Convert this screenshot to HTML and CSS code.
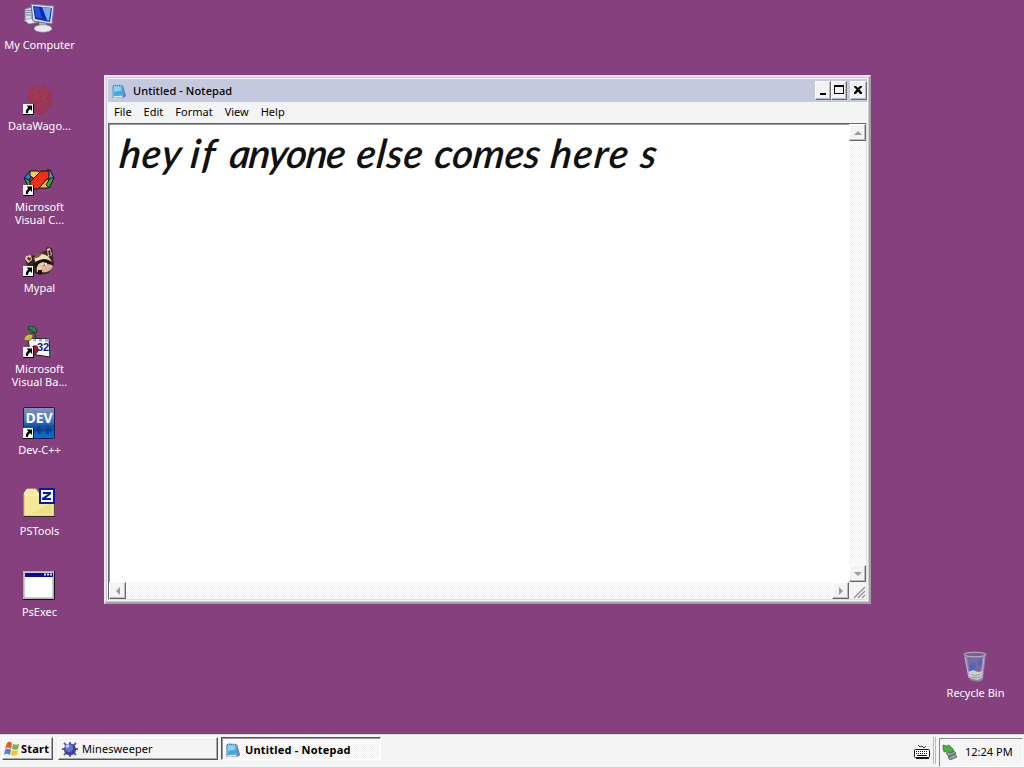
FILE: index.html
```html
<!DOCTYPE html>
<html lang="en">
  <head>
    <meta charset="UTF-8" />
    <meta name="viewport" content="width=device-width, initial-scale=1.0" />
    <title>Desktop</title>
    <link rel="stylesheet" href="styles.css">
  </head>
  <body>
    <!-- Shared icon symbols -->
    <svg class="symbols">
      <symbol id="shortcut" viewBox="0 0 11 11">
        <path d="M0 0h11v11H0z" fill="#000" />
        <path d="M0 0h10v10H0z" fill="#fff" />
        <path d="M3.500 1.500H9V7L7.300 5.300C5.500 6.500 5 7.300 5 9H3C2.500 6.600 3.600 4.800 5.300 3.500z" fill="#000" />
      </symbol>
      <symbol id="notepad" viewBox="0 0 16 16">
        <path d="M3 1l9 1 3 11-3 2-10-1z" fill="#aebce6" />
        <path d="M12 2l3 11-3 2z" fill="#7375bd" />
        <path d="M2 2.5L11.5 3 13 12.5 2.5 13z" fill="#43a9d8" />
        <path d="M3 3l7 .5.5 4L3 9z" fill="#8bd4ed" />
        <path d="M2 2.5h9.5" stroke="#457b9b" stroke-dasharray="1 1" />
        <path d="M1.500 3v11.500l10-.8" fill="none" stroke="#8fb4cc" />
        <path d="M3 14l8-.8" stroke="#e4f2f6" />
      </symbol>
    </svg>

    <main class="desktop">
      <div class="icons">
        <div class="icon">
          <svg viewBox="0 0 32 32">
            <path d="M2 7l7-2v16l-7-3z" fill="#d4d9e2" stroke="#777f91" />
            <path d="M3 9l5-1M3 11l5-1M3 13h5" stroke="#778297" />
            <path d="M1 18l10-2 5 4-10 2z" fill="#e9ebee" stroke="#878493" stroke-width=".6" />
            <path d="M16 20l7 1 1 5h-7z" fill="#b4bac5" />
            <ellipse cx="20" cy="26.500" rx="9" ry="3.800" fill="#e6e6ed" stroke="#817f91" stroke-width=".7" />
            <path d="M8 2l23 2-2 18L10 19z" fill="#dce3ed" stroke="#6d7186" />
            <path d="M10 4l19 2-2 14-15-3z" fill="#0b29b5" />
            <path d="M19 5l9 1-2 13-2-1z" fill="#7ba7ef" />
            <path d="M11 5l5 .5 3 11-6-1z" fill="#2053d3" />
          </svg>
          <span class="label">My Computer</span>
        </div>
        <div class="icon">
          <svg viewBox="0 0 32 32">
            <path d="M7 7l7-4 3 2 4-3 4 5 5 2-2 7 2 6-5 2-2 6-7 2-6-5-5-1 2-7-3-5z" fill="#973658" />
            <path d="M7 10l8-3 5-1 5 6-5 2 5 5-5 7-7-3-5-6zM9 14l10-2 2 8-7 4M13 4l-1 8 9 13M5 8l18 11" fill="none" stroke="#a83a51" stroke-width="1.2" />
          </svg>
          <svg class="shortcut"><use href="#shortcut" /></svg>
          <span class="label">DataWago...</span>
        </div>
        <div class="icon">
          <svg viewBox="0 0 32 32" stroke="#111" stroke-width="1">
            <path d="M1 14l6-7 3 3-4 6z" fill="#277be8" />
            <path d="M1 14l5 2 5 8-6-2z" fill="#21a34c" />
            <path d="M7 7h8l3 3-6 5-5-3z" fill="#f2cf4e" />
            <path d="M15 24l9-9 4 3-3 6z" fill="#f3c448" />
            <path d="M24 6h3l4 8-4 2-4-6z" fill="#5294ed" />
            <path d="M31 14l-5 10-3-3 4-7z" fill="#2ca64a" />
            <path d="M18 7h8v6L15 25H7v-7z" fill="#f32e13" />
          </svg>
          <svg class="shortcut"><use href="#shortcut" /></svg>
          <span class="label">Microsoft<br />Visual C...</span>
        </div>
        <div class="icon">
          <svg viewBox="0 0 32 32">
            <path d="M2 15l1-4 5-1 5 1 5-4 5-1 1-4 5 1 1 9 1 8-5 8-9 2-9-3-4-7z" fill="#3c251f" />
            <path d="M2 14l1-3 5-1 1 5-4 3zM24 4l3-1 2 7-4 2z" fill="#e9c9ae" />
            <path d="M4 14l1-2 3 1-1 3zM25 6l2-1 1 5-2 1z" fill="#4d3029" />
            <path d="M11 13c6-7 14-4 18 4-5-4-11-4-16 1z" fill="#eee2bc" />
            <path d="M10 14l4-5 7-2-5 5z" fill="#805c42" />
            <path d="M9 20c6-6 13-8 21-1-5-1-9 1-13 5z" fill="#171218" />
            <path d="M17 24c4-5 9-6 13-3-2 6-8 7-12 6z" fill="#d8b697" />
            <path d="M20 17c-5 1-7 4-6 10l4-1 2-5 3-3" fill="#e7cc9e" />
            <path d="M15 25h4v4h-4z" fill="#101015" />
            <circle cx="23" cy="19" r="1.2" fill="#fff" />
          </svg>
          <svg class="shortcut"><use href="#shortcut" /></svg>
          <span class="label">Mypal</span>
        </div>
        <div class="icon">
          <svg viewBox="0 0 32 32">
            <path d="M27 24l6 3-7 4z" fill="#77577f" />
            <path d="M5 12l21 1 1 18-20-3z" fill="#f5f6ee" stroke="#161a25" />
            <path d="M6 13h20v3L6 15z" fill="#7bc0e8" />
            <path d="M7 13h3v3H7zm6 0h3v3h-3zm6 0h3v3h-3z" fill="#fff" />
            <path d="M5 1c3-2 8-1 9 5-3 2-8 1-9-5z" fill="#29844b" stroke="#143724" />
            <path d="M1 14c0-5 5-7 9-5 0 4-4 7-9 5z" fill="#cdbb42" stroke="#675429" />
            <path d="M7 3l5 4 1 6" fill="none" stroke="#193e27" />
            <path d="M10 20l4 0 1 5-3 4-3-3z" fill="#a71922" stroke="#3d1820" />
            <text class="number" x="14" y="25">32</text>
          </svg>
          <svg class="shortcut"><use href="#shortcut" /></svg>
          <span class="label">Microsoft<br />Visual Ba...</span>
        </div>
        <div class="icon">
          <svg viewBox="0 0 32 32">
            <defs>
              <linearGradient id="dev" x2="0" y2="1">
                <stop stop-color="#8492b4" /><stop offset=".42" stop-color="#4877ba" /><stop offset=".6" stop-color="#0953a6" /><stop offset="1" stop-color="#0872ce" />
              </linearGradient>
            </defs>
            <rect x=".5" y=".5" width="31" height="31" rx="1" fill="url(#dev)" stroke="#1c1d55" />
            <path d="M12 23h8M16 19v8M21 23h8M25 19v8" stroke="#123e87" stroke-width="3" />
            <text class="dev-text" x="16" y="15.500">DEV</text>
          </svg>
          <svg class="shortcut"><use href="#shortcut" /></svg>
          <span class="label">Dev-C++</span>
        </div>
        <div class="icon">
          <svg viewBox="0 0 32 32">
            <path d="M2 4l2-3h9l3 4h15v23H1V5z" fill="#f5e89b" stroke="#d2bb60" />
            <path d="M1 28.500h31V7" fill="none" stroke="#322a2b" stroke-width="1.2" />
            <path d="M2 7h14M2 7V4l2-2h8l3 4" fill="none" stroke="#fff7cb" />
            <path d="M9 25l20-10v11z" fill="#ead875" opacity=".6" />
            <path d="M17 1h14v14H17z" fill="#fff" stroke="#0818ab" stroke-width="2" />
            <path d="M20 4h8v2l-5 4h5v2h-9v-2l6-4h-5z" fill="#0818ab" />
          </svg>
          <span class="label">PSTools</span>
        </div>
        <div class="icon">
          <svg viewBox="0 0 32 32">
            <path d="M0 2h31v28H0z" fill="#c8c8cc" />
            <path d="M1 3h29v26H1z" fill="#fff" stroke="#9a99a7" />
            <path d="M2 4h28v4H2z" fill="#0609a4" />
            <path d="M21 4.5h2v2h-2zm3 0h2v2h-2zm3 0h2v2h-2z" fill="#e2e2ef" />
            <path d="M0 30.5h31.5V2" fill="none" stroke="#111" />
          </svg>
          <span class="label">PsExec</span>
        </div>
      </div>

      <div class="icon recycle">
        <svg viewBox="0 0 32 32">
          <path d="M5 4l22-1-3 27-5 2-8-2z" fill="#9180ad" />
          <path d="M8 7h16l-2 17-11-1z" fill="#7a69a4" />
          <path d="M10 15l5-3 2 4-2 6-5-1zM18 12l4-3 1 4-3 3z" fill="#4b65c0" />
          <path d="M9 22l5-2 5 2 5-1-1 7-5 2-7-2z" fill="#cfd0c6" />
          <path d="M6 7l4 21M25 7l-3 21" stroke="#b9acd0" stroke-width="1.3" />
          <ellipse cx="16" cy="4.5" rx="11" ry="2.3" fill="#746786" stroke="#bfb4cf" />
          <path d="M12 24l4 2 5-2M12 27l5 1 4-1" stroke="#92978d" fill="none" />
        </svg>
        <span class="label">Recycle Bin</span>
      </div>

      <section class="window">
        <header class="title-bar">
          <svg class="app-icon"><use href="#notepad" /></svg>
          <h1>Untitled - Notepad</h1>
          <button aria-label="Minimize"><svg viewBox="0 0 12 12"><path d="M3 9h6v2H3z" /></svg></button>
          <button aria-label="Maximize"><svg viewBox="0 0 12 12"><path d="M1 1h10v9H1zm1 2v6h8V3z" fill-rule="evenodd" /></svg></button>
          <button class="close" aria-label="Close"><svg viewBox="0 0 12 12"><path d="M2 2h2l2 2 2-2h2v1L7.5 5.5 10 8.500V10H8L6 7.500 4 10H2V8.500L4.500 5.500 2 3z" /></svg></button>
        </header>
        <nav class="menu">
          <span>File</span><span>Edit</span><span>Format</span><span>View</span><span>Help</span>
        </nav>
        <div class="editor">
          <div class="paper">
            <p><span class="w-hey">hey </span><span class="w-if">if </span><span class="w-anyone">anyone </span><span class="w-else">else </span><span class="w-comes">comes </span><span class="w-here">here </span><span>s</span></p>
          </div>
          <div class="scroll vertical">
            <span class="arrow up"></span>
            <span class="arrow down"></span>
          </div>
          <div class="scroll horizontal">
            <span class="arrow left"></span>
            <span class="arrow right"></span>
          </div>
          <svg class="grip" viewBox="0 0 17 17"><path d="M5 16L16 5M9 16l7-7M13 16l3-3" /></svg>
        </div>
      </section>
    </main>

    <footer class="taskbar">
      <button class="start">
        <svg viewBox="0 0 16 16">
          <path d="M3 2c2-2 3-1 5 0L7 8C5 6 3 6 1 8z" fill="#e75a2c" />
          <path d="M9 3c2 1 4 1 6 0l-1 5c-2 1-4 1-6 0z" fill="#74b83e" />
          <path d="M1 9c2-2 4-1 6 0l-1 5c-2-1-4-2-6 0z" fill="#4a82d5" />
          <path d="M8 9c2 1 4 1 6 0l-1 5c-2 1-4 1-6 0z" fill="#f2c42d" />
        </svg>
        <span>Start</span>
      </button>
      <button class="task">
        <svg viewBox="0 0 16 16">
          <path d="M8 1v15M0 8h16M2 2l12 12M14 2L2 14" stroke="#5a5ca0" stroke-width="1.8" />
          <circle cx="8" cy="8.500" r="6" fill="#3d409c" />
          <circle cx="7" cy="7" r="4" fill="#6876c6" />
          <circle cx="5.500" cy="5" r="1.800" fill="#c5d0fa" />
        </svg>
        <span>Minesweeper</span>
      </button>
      <button class="task active">
        <svg><use href="#notepad" /></svg>
        <span>Untitled - Notepad</span>
      </button>
      <svg class="keyboard" viewBox="0 0 16 15">
        <path d="M4 1l2 2 2-1 2 2 2-2" fill="none" stroke="#333" />
        <rect x=".5" y="5.500" width="15" height="8" rx="1" fill="#fff" stroke="#111" />
        <path d="M2 7.500h12M2 9.500h12" stroke="#111" stroke-dasharray="1 1" />
        <path d="M3 11.500h10M2 14.500h13" stroke="#111" />
      </svg>
      <span class="divider"></span>
      <div class="tray">
        <svg viewBox="0 0 16 16">
          <path d="M4 9l7-3 3 3-7 4zM6 13l7-3 2 3-7 3z" fill="#9b9fa2" stroke="#4e5552" stroke-width=".8" />
          <path d="M1 4V1l4 1 2-1 4 4v3L8 9 6 7 2 8z" fill="#4cb03c" stroke="#277122" stroke-width=".7" />
        </svg>
        <time>12:24 PM</time>
      </div>
    </footer>
  </body>
</html>
```
FILE: styles.css
```css
* {
  box-sizing: border-box;
  margin: 0;
  padding: 0;
}

body {
  width: 1024px;
  height: 768px;
  display: flex;
  flex-direction: column;
  overflow: hidden;
  background: #85407d;
  color: #000;
  font: 11px/13px "Noto Sans", sans-serif;
}

button {
  font: inherit;
  color: inherit;
}

.symbols {
  position: absolute;
  width: 0;
  height: 0;
}

.desktop {
  position: relative;
  flex: 1;
  padding-top: 2px;
}

/* Desktop icons */
.icons {
  width: 79px;
  display: grid;
  grid-auto-rows: 81px;
}

.icon {
  position: relative;
  display: flex;
  flex-direction: column;
  align-items: center;
  gap: 4px;
  color: #fff;
  text-align: center;
}

.icon > svg {
  width: 32px;
  height: 32px;
  margin-right: 1px;
}

.icon > .shortcut {
  position: absolute;
  left: 23px;
  top: 21px;
  width: 11px;
  height: 11px;
}

.label {
  white-space: nowrap;
}

.number {
  font: bold 11px "Liberation Sans", sans-serif;
  fill: #101f77;
}

.dev-text {
  font: bold 14px "Noto Sans", sans-serif;
  fill: #fff;
  text-anchor: middle;
}

.recycle {
  position: absolute;
  left: 936px;
  top: 650px;
  width: 79px;
}

/* Notepad window */
.window {
  position: absolute;
  left: 104px;
  top: 75px;
  width: 767px;
  height: 529px;
  display: flex;
  flex-direction: column;
  padding: 2px;
  border: 2px solid;
  border-color: #f2e5f1 #a39fa6 #a39fa6 #f2e5f1;
  background: #f3f4f4;
  box-shadow: inset 1px 1px #c9c7cf, inset -1px -1px #d0ced1;
}

.title-bar {
  display: flex;
  align-items: center;
  height: 23px;
  padding: 0 0 0 3px;
  background: #c5c9e0;
}

.app-icon {
  width: 16px;
  height: 16px;
}

.title-bar h1 {
  flex: 1;
  margin-left: 6px;
  font-size: 11px;
  font-weight: 500;
  letter-spacing: 0.1px;
}

.title-bar button {
  width: 16px;
  height: 19px;
  margin-bottom: 1px;
  padding: 2px 1px;
  border: 1px solid;
  border-color: #fff #706e71 #706e71 #fff;
  background: #f3f2f3;
  box-shadow: inset -1px -1px #bbb;
}

.title-bar .close {
  width: 17px;
  margin-left: 3px;
}

.title-bar button svg {
  display: block;
  width: 12px;
  height: 12px;
}

.menu {
  display: flex;
  gap: 12px;
  height: 21px;
  padding: 3px 6px;
}

.editor {
  flex: 1;
  display: grid;
  grid-template-columns: 1fr 17px;
  grid-template-rows: 1fr 17px;
  border: 1px solid #68656a;
  border-right-color: #e0e0e0;
  border-bottom-color: #e0e0e0;
  background: #fff;
  box-shadow: inset 1px 1px #99979b;
}

.paper {
  padding: 2px 0 0 11px;
}

.paper p {
  display: flex;
  font: italic 600 40px/54px "Comic Sans MS", Lato, sans-serif;
  color: #111;
  white-space: pre;
  transform: skewX(-7deg);
}

.w-hey {
  width: 71px;
  letter-spacing: 1px;
}

.w-if {
  width: 39px;
  letter-spacing: 2px;
}

.w-anyone {
  width: 127px;
  letter-spacing: -1.2px;
}

.w-else {
  width: 78px;
  letter-spacing: 0.8px;
}

.w-comes {
  width: 116px;
}

.w-here {
  width: 90px;
  letter-spacing: 1.5px;
}

.scroll {
  display: flex;
  justify-content: space-between;
  background: repeating-conic-gradient(#fff 0 25%, #f1f1f1 0 50%) 0 0 / 2px 2px;
}

.vertical {
  flex-direction: column;
}

.arrow {
  display: grid;
  place-items: center;
  width: 17px;
  height: 17px;
  border: 1px solid;
  border-color: #fff #69676a #69676a #fff;
  background: #f3f3f3;
  box-shadow: inset -1px -1px #bbb;
}

.arrow::before {
  content: "";
  border: 4px solid transparent;
}

.up::before {
  border-top: 0;
  border-bottom-color: #9a9a9a;
}

.down::before {
  border-bottom: 0;
  border-top-color: #9a9a9a;
}

.left::before {
  border-left: 0;
  border-right-color: #9a9a9a;
}

.right::before {
  border-right: 0;
  border-left-color: #9a9a9a;
}

.grip {
  width: 17px;
  height: 17px;
  background: #f4f4f4;
  fill: none;
  stroke: #8d8d8d;
  stroke-width: 1.3;
}

/* Taskbar */
.taskbar {
  display: flex;
  height: 34px;
  padding: 2px 1px 1px 2px;
  border-top: 1px solid #d9d2db;
  border-bottom: 1px solid #cfcfcf;
  background: #f4f4f4;
  box-shadow: inset 0 1px #fff;
}

.start,
.task {
  display: flex;
  align-items: center;
  height: 23px;
  border: 1px solid;
  border-color: #fff #555 #555 #fff;
  background: #f4f4f4;
  box-shadow: inset -1px -1px #aaa;
}

.start {
  width: 51px;
  padding-left: 1px;
  gap: 1px;
  font-weight: bold;
  letter-spacing: 0.2px;
}

.taskbar button svg {
  width: 16px;
  height: 16px;
}

.task {
  width: 160px;
  margin-left: 5px;
  padding-left: 3px;
  gap: 4px;
  letter-spacing: 0.1px;
}

.active {
  margin-left: 3px;
  padding-top: 2px;
  border-color: #555 #fff #fff #555;
  background: repeating-conic-gradient(#fff 0 25%, #efefef 0 50%) 0 0 / 2px 2px;
  box-shadow: inset 1px 1px #999;
  font-weight: bold;
  letter-spacing: 0.2px;
}

.keyboard {
  width: 16px;
  height: 15px;
  margin: 7px 3px 0 auto;
}

.divider {
  width: 3px;
  height: 27px;
  margin-right: 3px;
  border-left: 1px solid #bbb;
  border-right: 1px solid #bbb;
}

.tray {
  display: flex;
  align-items: center;
  gap: 7px;
  width: 84px;
  height: 29px;
  padding: 0 0 2px 2px;
  margin-top: 1px;
  border: 1px solid;
  border-color: #888 #fff #fff #888;
}

.tray svg {
  width: 16px;
  height: 16px;
}
```
